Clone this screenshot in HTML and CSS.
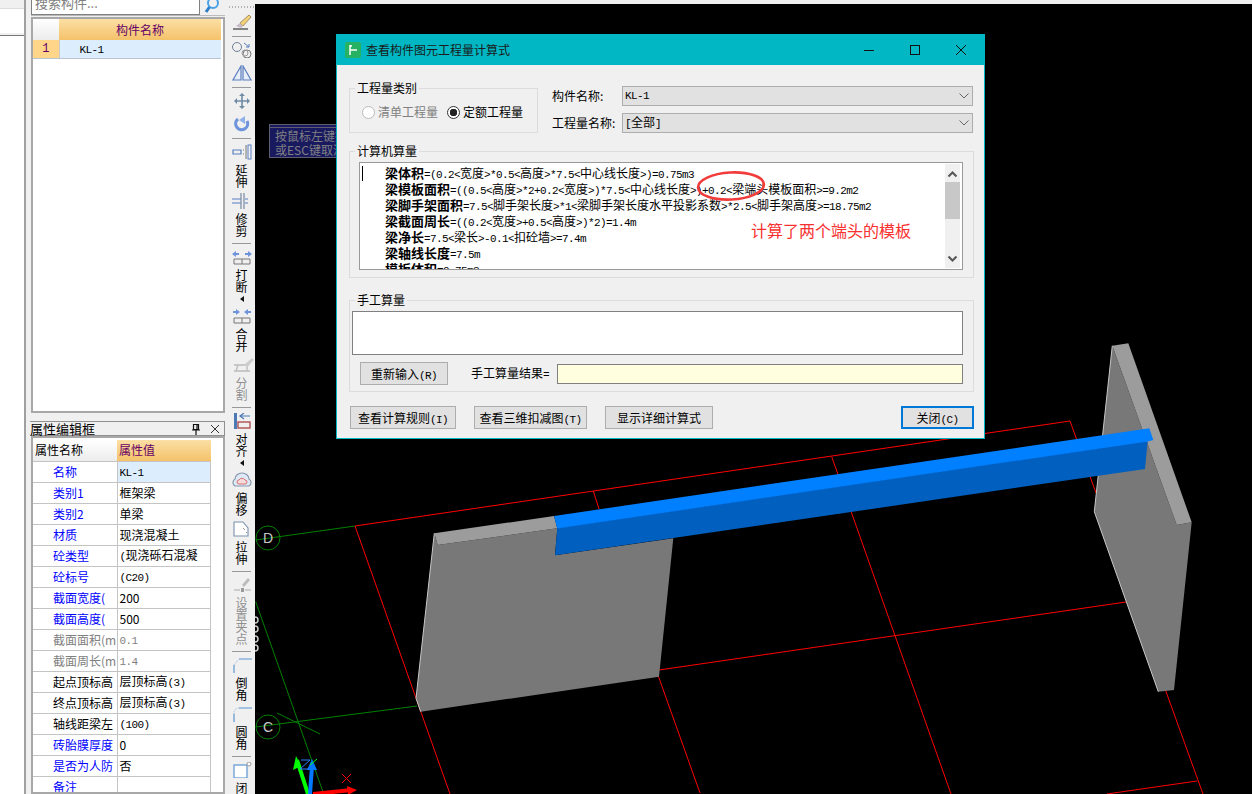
FILE: index.html
```html
<!DOCTYPE html>
<html lang="zh-CN">
<head>
    <meta charset="UTF-8">
    <title>查看构件图元工程量计算式</title>
    <link rel="stylesheet" href="styles.css">
</head>
<body>
    <div class="strip">
        <div class="strip-tab"></div>
        <div class="strip-rest"></div>
    </div>

    <div class="side">
        <div class="search">
            <div class="search-input">搜索构件...</div>
            <svg class="search-icon" width="16" height="16" viewBox="0 0 16 16">
                <circle cx="9" cy="4" r="5" fill="none" stroke="#4aa3e8" stroke-width="2"/>
                <path d="M5.5 8 L2 13" stroke="#2f7fc8" stroke-width="3"/>
            </svg>
        </div>
        <div class="frame list-frame">
            <table class="grid list">
                <tr class="head">
                    <th class="corner"></th>
                    <th class="orange">构件名称</th>
                </tr>
                <tr class="picked">
                    <td class="row-no">1</td>
                    <td class="name-cell"><span class="m">KL-1</span></td>
                </tr>
            </table>
        </div>

        <div class="prop-title">
            <span>属性编辑框</span>
            <svg width="12" height="12" viewBox="0 0 12 12"><path d="M3.5 1.5h5v5h-5z M2 7h8 M6 7v5 M7 2v4" fill="none" stroke="#111" stroke-width="1.2"/></svg>
            <svg class="prop-close" width="12" height="12" viewBox="0 0 12 12"><path d="M2 2l8 8M10 2l-8 8" stroke="#333" stroke-width="1"/></svg>
        </div>
        <div class="frame prop-frame">
            <table class="grid props">
                <tr class="head">
                    <th class="corner prop-name">属性名称</th>
                    <th class="orange prop-val">属性值</th>
                </tr>
                <tr class="picked"><td class="blue">名称</td><td class="val"><span class="m">KL-1</span></td></tr>
                <tr><td class="blue">类别1</td><td class="val">框架梁</td></tr>
                <tr><td class="blue">类别2</td><td class="val">单梁</td></tr>
                <tr><td class="blue">材质</td><td class="val">现浇混凝土</td></tr>
                <tr><td class="blue">砼类型</td><td class="val"><span class="m">(</span>现浇砾石混凝</td></tr>
                <tr><td class="blue">砼标号</td><td class="val"><span class="m">(C20)</span></td></tr>
                <tr><td class="blue">截面宽度(</td><td class="val">200</td></tr>
                <tr><td class="blue">截面高度(</td><td class="val">500</td></tr>
                <tr><td class="grey">截面面积(m</td><td class="val grey"><span class="m">0.1</span></td></tr>
                <tr><td class="grey">截面周长(m</td><td class="val grey"><span class="m">1.4</span></td></tr>
                <tr><td>起点顶标高</td><td class="val">层顶标高<span class="m">(3)</span></td></tr>
                <tr><td>终点顶标高</td><td class="val">层顶标高<span class="m">(3)</span></td></tr>
                <tr><td>轴线距梁左</td><td class="val"><span class="m">(100)</span></td></tr>
                <tr><td class="blue">砖胎膜厚度</td><td class="val">0</td></tr>
                <tr><td class="blue">是否为人防</td><td class="val">否</td></tr>
                <tr><td class="blue">备注</td><td class="val"></td></tr>
            </table>
        </div>
    </div>

    <div class="tools">
        <div class="grip"></div>
        <div class="tool">
            <svg width="24" height="16" viewBox="0 0 24 16"><path d="M19 1 L10 9 L13 12 L21 3z" fill="#f3d27a" stroke="#a98f5a"/><path d="M10 9 L6 12 L11 14 L13 12z" fill="#c9b9c9"/><path d="M3 15 H18" stroke="#555" stroke-width="1.4"/></svg>
        </div>
        <div class="sep"></div>
        <div class="tool roomy">
            <svg width="24" height="16" viewBox="0 0 24 16"><circle cx="7" cy="5" r="4.5" fill="none" stroke="#6f7f95"/><circle cx="17" cy="12" r="4" fill="none" stroke="#777"/><circle cx="15" cy="11" r="3" fill="none" stroke="#999"/><path d="M14 1l5 4M19 2v3h-3" fill="none" stroke="#5b7fc0"/></svg>
        </div>
        <div class="tool">
            <svg width="24" height="16" viewBox="0 0 24 16"><path d="M11 1 L3 15 H11z M13 1 L21 15 H13z" fill="#e8eefa" stroke="#5b7fc0" stroke-width="1.2"/></svg>
        </div>
        <div class="sep"></div>
        <div class="tool roomy">
            <svg width="24" height="16" viewBox="0 0 24 16"><path d="M12 1v14M5 8h14" stroke="#6f8aa5" stroke-width="1.6"/><path d="M12 0l-3 3h6zM12 16l-3-3h6zM4 8l3-3v6zM20 8l-3-3v6z" fill="#6f8aa5"/></svg>
        </div>
        <div class="tool">
            <svg width="24" height="16" viewBox="0 0 24 16"><path d="M8 3 A6 6 0 1 0 17 5" fill="none" stroke="#6f94dc" stroke-width="3.2"/><path d="M15 0v8l-6-4z" fill="#8fb0e8"/></svg>
        </div>
        <div class="sep"></div>
        <div class="tool">
            <svg width="24" height="16" viewBox="0 0 24 16"><path d="M3 6h8v4H3z" fill="none" stroke="#5b7fc0" stroke-width="1.2"/><path d="M13 6h1M13 10h1M16 1v14" stroke="#777"/><rect x="18" y="1" width="3" height="14" fill="none" stroke="#5b7fc0"/></svg>
            <div class="lab">延伸</div>
        </div>
        <div class="tool">
            <svg width="24" height="16" viewBox="0 0 24 16"><path d="M2 6h9M2 10h9M15 6h3M15 10h3" stroke="#5b7fc0" stroke-width="1.2"/><path d="M11 0v16M14 0v16" stroke="#7a8ca5" stroke-width="1.2"/></svg>
            <div class="lab">修剪</div>
        </div>
        <div class="sep"></div>
        <div class="tool">
            <svg width="24" height="16" viewBox="0 0 24 16"><path d="M2 5l4-3v2h3v2H6v2zM22 5l-4-3v2h-3v2h3v2z" fill="#6f94dc"/><path d="M4 10h16v5H4zM12 10v5" fill="none" stroke="#777"/></svg>
            <div class="lab">打断</div>
            <div class="tri"></div>
        </div>
        <div class="tool">
            <svg width="24" height="16" viewBox="0 0 24 16"><path d="M10 4L6 1v2H3v2h3v2zM14 4l4-3v2h3v2h-3v2z" fill="#6f94dc"/><path d="M4 10h16v5H4zM12 10v5" fill="none" stroke="#777"/></svg>
            <div class="lab">合并</div>
        </div>
        <div class="tool">
            <svg width="24" height="16" viewBox="0 0 24 16"><path d="M4 8h15M4 14h16M6 14l2-6M17 14v-6" stroke="#bbb" fill="none" stroke-width="1.3"/><path d="M22 1l-8 7 3 2 7-7z" fill="#ccc"/></svg>
            <div class="lab off">分割</div>
        </div>
        <div class="sep"></div>
        <div class="tool">
            <svg width="24" height="16" viewBox="0 0 24 16"><rect x="4" y="0" width="3" height="16" fill="#4f79b5"/><path d="M20 3h-9M14 0l-4 3 4 3" fill="none" stroke="#4f79b5" stroke-width="1.2"/><rect x="8" y="9" width="12" height="6" fill="none" stroke="#b05050" stroke-width="1.4"/></svg>
            <div class="lab">对齐</div>
            <div class="tri"></div>
        </div>
        <div class="tool">
            <svg width="24" height="16" viewBox="0 0 24 16"><path d="M5 14 a4 4 0 0 1 0-7 a7 6 0 0 1 14 0 a4 4 0 0 1 0 7z" fill="#dfe8f5" stroke="#8898ad" stroke-width="1.2"/><path d="M9 12 a2 2 0 0 1 0-4 a3.5 3.5 0 0 1 6 0 a2 2 0 0 1 0 4z" fill="#f5dcdc" stroke="#d87070"/></svg>
            <div class="lab">偏移</div>
        </div>
        <div class="tool">
            <svg width="24" height="16" viewBox="0 0 24 16"><path d="M4 1h9l5 6v8H4z" fill="#fff" stroke="#7d92ad" stroke-width="1.1"/><path d="M13 7l2 2M16 11l1 1" stroke="#999"/></svg>
            <div class="lab">拉伸</div>
        </div>
        <div class="sep"></div>
        <div class="tool">
            <svg width="24" height="16" viewBox="0 0 24 16"><path d="M18 1l-6 7 2 2 6-7z" fill="#bbb"/><path d="M4 13h6M15 13h6" stroke="#aaa"/><rect x="11" y="11" width="3" height="4" fill="#999"/></svg>
            <div class="lab off">设置夹点</div>
        </div>
        <div class="sep"></div>
        <div class="tool">
            <svg width="24" height="16" viewBox="0 0 24 16"><path d="M4 16V8M9 2h13" stroke="#5b95d0" stroke-width="1.2" fill="none"/><path d="M4 8L9 2" stroke="#9cb6d8" stroke-dasharray="1 1"/></svg>
            <div class="lab">倒角</div>
        </div>
        <div class="tool">
            <svg width="24" height="16" viewBox="0 0 24 16"><path d="M4 16V8M9 2h13" stroke="#5b95d0" stroke-width="1.2" fill="none"/><path d="M4 8Q4 2 9 2" stroke="#9cb6d8" stroke-dasharray="1 1" fill="none"/></svg>
            <div class="lab">圆角</div>
        </div>
        <div class="sep"></div>
        <div class="tool">
            <svg width="24" height="16" viewBox="0 0 24 16"><rect x="4" y="3" width="13" height="13" fill="#fff" stroke="#5b95d0" stroke-width="1.2"/><circle cx="19" cy="2" r="2" fill="#fff" stroke="#999"/></svg>
            <div class="lab">闭</div>
        </div>
    </div>

    <div class="view">
        <svg class="scene" width="997" height="790" viewBox="255 4 997 790">
            <g class="red-lines">
                <path d="M355 526 L800 460.7 L1070 421 L1096 493"/>
                <path d="M355 526 L450 794"/>
                <path d="M593.3 491 L599 509"/>
                <path d="M658.3 676 L700 793"/>
                <path d="M831.7 456.7 L951 794"/>
                <path d="M659 670 L1128 601.7"/>
                <path d="M1165.7 690.7 L1203 794"/>
                <path d="M1106.7 794 L1197 781"/>
            </g>
            <g class="green-lines">
                <circle cx="268" cy="538" r="12"/>
                <circle cx="268" cy="727" r="12"/>
                <path d="M255.7 540 L355 526"/>
                <path d="M255.7 727 L417 706"/>
                <path d="M255.7 601.7 L323 792"/>
                <path d="M277 713 L320 734"/>
            </g>
            <text class="axis-name" x="268" y="543">D</text>
            <text class="axis-name" x="268" y="732">C</text>
            <g class="marks">
                <circle cx="255" cy="620" r="3"/>
                <circle cx="255" cy="629" r="3"/>
                <circle cx="255" cy="639" r="3"/>
                <circle cx="255" cy="648" r="3"/>
            </g>

            <polygon class="wall-face" points="437.7,545 557.3,528.3 555,555.3 673.3,538.3 659,676.7 420.7,711.7 416,698.3 434.3,533.3"/>
            <polygon class="wall-top" points="434.3,533.3 554,516 557.3,528.3 437.7,545"/>
            <path class="wall-edge" d="M434.3 533.3 L416 698.3 L420.7 711.7"/>
            <polygon class="wall-face" points="1112.3,345.7 1176.7,525 1191.7,522.3 1174,690 1158.3,691.7 1094.3,511.7"/>
            <polygon class="wall-top" points="1112.3,345.7 1128.3,343.3 1191.7,522.3 1176.7,525"/>
            <path class="wall-edge" d="M1112.3 345.7 L1094.3 511.7 L1158.3 691.7"/>

            <polygon class="beam-front" points="557.3,528 1147.7,441 1145,469 555,555.3"/>
            <polygon class="beam-top" points="554,516 1149.3,428.3 1153.3,440 1147.7,441.5 557.3,528.5"/>

            <g class="axes">
                <path d="M297 760 L308 794" stroke="#00ff00" stroke-width="4"/>
                <path d="M296 756 L293 770 L301 766z" fill="#00ff00"/>
                <path d="M312 766 L310 794" stroke="#0078ff" stroke-width="4"/>
                <path d="M312 759 L307 770 L317 770z" fill="#0078ff"/>
                <path d="M313 794 L352 790" stroke="#ff0000" stroke-width="4"/>
                <path d="M347 786 L357 790 L348 795z" fill="#ff0000"/>
                <path d="M342 774 L351 783 M351 774 L342 783" stroke="#ff0000"/>
                <path d="M301 760 H310 L300 769 H309" stroke="#2a80ff" fill="none"/>
                <path d="M310 765 L317 759" stroke="#00ff00"/>
            </g>
        </svg>

        <div class="hint">
            <div>按鼠标左键指定</div>
            <div>或ESC键取消</div>
        </div>

        <div class="dialog">
            <div class="dialog-title">
                <svg class="app-icon" width="16" height="16" viewBox="0 0 16 16"><rect width="16" height="16" rx="2" fill="#27b262"/><path d="M5 3v10M5 4h2M5 8h7" stroke="#fff" stroke-width="1.5" fill="none"/></svg>
                <span class="dialog-name">查看构件图元工程量计算式</span>
                <svg class="win-btn" width="10" height="10" viewBox="0 0 10 10"><path d="M0 5.5H10" stroke="#111"/></svg>
                <svg class="win-btn" width="10" height="10" viewBox="0 0 10 10"><rect x=".5" y=".5" width="9" height="9" fill="none" stroke="#111"/></svg>
                <svg class="win-btn" width="10" height="10" viewBox="0 0 10 10"><path d="M0 0L10 10M10 0L0 10" stroke="#111"/></svg>
            </div>

            <div class="dialog-body">
                <div class="top-row">
                    <fieldset class="group kind">
                        <legend>工程量类别</legend>
                        <div class="radios">
                            <span class="radio off"><i class="dot"></i>清单工程量</span>
                            <span class="radio"><i class="dot on"></i>定额工程量</span>
                        </div>
                    </fieldset>
                    <div class="picks">
                        <label>构件名称:</label>
                        <div class="select"><span class="m">KL-1</span><svg width="10" height="6" viewBox="0 0 10 6"><path d="M.5 .5L5 5L9.5 .5" fill="none" stroke="#666"/></svg></div>
                        <label>工程量名称:</label>
                        <div class="select"><span><span class="m">[</span>全部<span class="m">]</span></span><svg width="10" height="6" viewBox="0 0 10 6"><path d="M.5 .5L5 5L9.5 .5" fill="none" stroke="#666"/></svg></div>
                    </div>
                </div>

                <fieldset class="group calc">
                    <legend>计算机算量</legend>
                    <div class="calc-box">
                        <div class="caret"></div>
                        <div class="calc-lines">
                            <div><b>梁体积</b><span class="m">=(0.2&lt;</span>宽度<span class="m">&gt;*0.5&lt;</span>高度<span class="m">&gt;*7.5&lt;</span>中心线长度<span class="m">&gt;)=0.75m3</span></div>
                            <div><b>梁模板面积</b><span class="m">=((0.5&lt;</span>高度<span class="m">&gt;*2+0.2&lt;</span>宽度<span class="m">&gt;)*7.5&lt;</span>中心线长度<span class="m">&gt;)+0.2&lt;</span>梁端头模板面积<span class="m">&gt;=9.2m2</span></div>
                            <div><b>梁脚手架面积</b><span class="m">=7.5&lt;</span>脚手架长度<span class="m">&gt;*1&lt;</span>梁脚手架长度水平投影系数<span class="m">&gt;*2.5&lt;</span>脚手架高度<span class="m">&gt;=18.75m2</span></div>
                            <div><b>梁截面周长</b><span class="m">=((0.2&lt;</span>宽度<span class="m">&gt;+0.5&lt;</span>高度<span class="m">&gt;)*2)=1.4m</span></div>
                            <div><b>梁净长</b><span class="m">=7.5&lt;</span>梁长<span class="m">&gt;-0.1&lt;</span>扣砼墙<span class="m">&gt;=7.4m</span></div>
                            <div><b>梁轴线长度</b><span class="m">=7.5m</span></div>
                            <div><b>模板体积</b><span class="m">=0.75m3</span></div>
                        </div>
                        <div class="scroll">
                            <svg width="15" height="8" viewBox="0 0 15 8"><path d="M3.5 6.5L7.5 2.5L11.5 6.5" fill="none" stroke="#555" stroke-width="2"/></svg>
                            <div class="thumb"></div>
                            <svg class="scroll-down" width="15" height="8" viewBox="0 0 15 8"><path d="M3.5 1.5L7.5 5.5L11.5 1.5" fill="none" stroke="#555" stroke-width="2"/></svg>
                        </div>
                    </div>
                </fieldset>

                <fieldset class="group hand">
                    <legend>手工算量</legend>
                    <div class="hand-box"></div>
                    <div class="hand-row">
                        <div class="btn reenter">重新输入<span class="m">(R)</span></div>
                        <span class="hand-label">手工算量结果<span class="m">=</span></span>
                        <div class="hand-result"></div>
                    </div>
                </fieldset>

                <div class="actions">
                    <div class="btn rule">查看计算规则<span class="m">(I)</span></div>
                    <div class="btn cut">查看三维扣减图<span class="m">(T)</span></div>
                    <div class="btn detail">显示详细计算式</div>
                    <div class="btn close">关闭<span class="m">(C)</span></div>
                </div>
            </div>

            <svg class="mark-ring" width="76" height="36" viewBox="0 0 76 36"><ellipse cx="38" cy="18" rx="33" ry="13.5" transform="rotate(-3 38 18)" fill="none" stroke="#f23c3c" stroke-width="2.6"/></svg>
            <div class="note">计算了两个端头的模板</div>
        </div>
    </div>
</body>
</html>
```

FILE: styles.css
```css
* {
    box-sizing: border-box;
}
html, body {
    margin: 0;
    height: 794px;
    overflow: hidden;
}
body {
    display: flex;
    background-color: #f0f0f0;
    color: #000;
    font-family: "Noto Sans CJK SC", "Liberation Sans", sans-serif;
    font-size: 12px;
    line-height: 16px;
}
/* latin in the old app font is 6px a char */
.m {
    font-family: "Liberation Mono", monospace;
    font-size: 11px;
    letter-spacing: -0.6px;
}

/* far left strip */
.strip {
    width: 26px;
    flex: none;
    border-right: 2px solid #a0a0a0;
    display: flex;
    flex-direction: column;
}
.strip-tab {
    height: 28px;
    margin-top: 8px;
    background-color: #fff;
    border-top: 1px solid #ddd;
    border-bottom: 1px solid #777;
    box-shadow: inset 0 -2px 0 #f0f0f0;
}
.strip-rest {
    flex: 1;
    background-color: #fff;
}

/* lists on the left */
.side {
    width: 199px;
    flex: none;
    padding-left: 5px;
    display: flex;
    flex-direction: column;
}
.search {
    height: 16px;
    flex: none;
    display: flex;
    border-bottom: 1px solid #bbb;
}
.search-input {
    width: 169px;
    height: 15px;
    padding-left: 3px;
    line-height: 6px;
    color: #808080;
    background-color: #fff;
    border: 1px solid #808080;
    border-top: none;
    overflow: hidden;
    font-size: 13px;
}
.search-icon {
    margin: -1px 0 0 4px;
}
.frame {
    border: 2px solid #a8a8a8;
    background-color: #fff;
}
.list-frame {
    height: 396px;
    flex: none;
    margin-top: 1px;
}
.prop-frame {
    flex: 1;
    min-height: 0;
    padding-top: 2px;
    overflow: hidden;
}
.grid {
    border-collapse: collapse;
    table-layout: fixed;
}
.grid th, .grid td {
    padding: 0;
    font-weight: 400;
    overflow: hidden;
    white-space: nowrap;
}
.corner {
    background: linear-gradient(#ffffff, #ececec);
}
.orange {
    background: linear-gradient(#fbdfa5, #f4c26a);
    color: #660066;
}
.list {
    width: 188px;
}
.list .corner {
    width: 26px;
}
.list .head th {
    height: 21px;
}
.list .picked td {
    height: 18px;
    border-bottom: 1px solid #b9c4d0;
}
.list .orange {
    text-align: center;
}
.row-no {
    background-color: #ffd58a;
    color: #660066;
    text-align: center;
    font-family: "Liberation Mono", monospace;
    border-right: 1px solid #c8c8c8;
}
.name-cell {
    background-color: #dcedfd;
    padding-left: 20px !important;
}
.prop-title {
    height: 15px;
    flex: none;
    margin: 8px 0 0 -1px;
    display: flex;
    align-items: center;
    border: 1px solid #909090;
    border-left: none;
    font-size: 13px;
}
.prop-title span {
    width: 160px;
}
.prop-close {
    margin-left: 7px;
}
.props {
    width: 178px;
}
.props .head th {
    height: 21px;
    text-align: left;
}
.props td {
    height: 21px;
    border-top: 1px solid #c4c4c4;
    border-bottom: 1px solid #c4c4c4;
    padding-left: 20px;
}
.prop-name {
    width: 84px;
    padding-left: 2px !important;
}
.prop-val {
    padding-left: 2px !important;
}
.props td.val {
    padding-left: 2px;
    border-left: 1px solid #c4c4c4;
    border-right: 1px solid #c4c4c4;
}
.props .picked .val {
    background-color: #dcedfd;
}
.blue {
    color: #0000ff;
}
.grey {
    color: #808080;
}

/* vertical drawing toolbar */
.tools {
    width: 30px;
    flex: none;
    padding: 6px 0 0 3px;
    display: flex;
    flex-direction: column;
    align-items: center;
}
.grip {
    width: 26px;
    height: 2px;
    flex: none;
    margin-bottom: 6px;
    background-image: linear-gradient(90deg, #b0b0b0 50%, transparent 50%);
    background-size: 3px 2px;
}
.tool {
    display: flex;
    flex: none;
    flex-direction: column;
    align-items: center;
    margin-bottom: 5px;
}
.tool.roomy {
    margin-bottom: 7px;
}
.lab {
    width: 12px;
    margin-top: 4px;
    font-size: 12px;
    line-height: 12px;
    word-break: break-all;
}
.lab.off {
    color: #909090;
}
.tri {
    width: 0;
    height: 0;
    margin: 3px 0 1px;
    border-top: 3px solid transparent;
    border-bottom: 3px solid transparent;
    border-right: 4px solid #111;
}
.sep {
    width: 19px;
    height: 1px;
    flex: none;
    margin: 1px 0 5px;
    background-color: #999;
}

/* 3d view */
.view {
    flex: 1;
    height: 790px;
    margin-top: 4px;
    background-color: #000;
    position: relative;
}
.scene {
    display: block;
}
.red-lines path {
    fill: none;
    stroke: #ff0000;
    stroke-width: 1;
}
.green-lines circle, .green-lines path {
    fill: none;
    stroke: #008000;
    stroke-width: 1;
}
.axis-name {
    fill: #c8c8c8;
    font-family: "Liberation Sans", sans-serif;
    font-size: 14px;
    text-anchor: middle;
}
.marks circle {
    fill: none;
    stroke: #c8c8c8;
    stroke-width: 1.5;
}
.wall-face {
    fill: #787878;
}
.wall-top {
    fill: #9c9c9c;
}
.wall-edge {
    fill: none;
    stroke: #c8c8c8;
}
.beam-front {
    fill: #005fbf;
}
.beam-top {
    fill: #007fff;
}
.hint {
    position: absolute;
    left: 14px;
    top: 120px;
    width: 90px;
    height: 34px;
    padding: 4px 0 0 5px;
    background-color: #191960;
    border: 1px solid #5e5e70;
    color: #808080;
    line-height: 14px;
    font-size: 12px;
    box-shadow: inset 0 2px 0 #191960, inset 0 3px 0 #5e5e70;
    white-space: nowrap;
    overflow: hidden;
}

/* dialog */
.dialog {
    position: absolute;
    left: 81px;
    top: 30px;
    width: 649px;
    height: 405px;
    background-color: #f0f0f0;
    border: 1px solid #00b7c3;
    border-top: none;
}
.dialog-title {
    height: 31px;
    padding: 0 18px 0 8px;
    display: flex;
    align-items: center;
    background-color: #00b7c3;
    color: #1a1a1a;
}
.dialog-name {
    flex: 1;
    margin-left: 5px;
}
.win-btn {
    margin-left: 36px;
}
.dialog-body {
    padding: 16px 10px 0 12px;
}
.top-row {
    display: flex;
    height: 52px;
    gap: 14px;
}
.group {
    margin: 0;
    padding: 0;
    border: 1px solid #dcdcdc;
    min-width: 0;
}
.group legend {
    margin-left: 5px;
    padding: 0 2px;
    line-height: 14px;
}
.kind {
    width: 189px;
    height: 52px;
}
.radios {
    display: flex;
    gap: 9px;
    padding: 9px 0 0 12px;
}
.radio {
    display: flex;
    align-items: center;
    gap: 3px;
}
.radio.off {
    color: #808080;
}
.dot {
    width: 13px;
    height: 13px;
    border-radius: 50%;
    border: 1px solid #333;
    background-color: #fff;
    display: block;
}
.off .dot {
    border-color: #bbb;
}
.dot.on {
    background: radial-gradient(circle, #222 3.5px, #fff 4px);
}
.picks {
    flex: 1;
    display: grid;
    grid-template-columns: 70px 351px;
    grid-auto-rows: 20px;
    row-gap: 7px;
    padding-top: 5px;
    align-items: center;
}
.select {
    height: 20px;
    padding: 0 3px 0 2px;
    display: flex;
    align-items: center;
    justify-content: space-between;
    background-color: #e1e1e1;
    border: 1px solid #adadad;
}
.calc {
    height: 134px;
    margin-top: 11px;
}
.calc-box {
    position: relative;
    width: 604px;
    height: 108px;
    margin: 4px 0 0 9px;
    background-color: #fff;
    border: 1px solid #999;
    overflow: hidden;
}
.caret {
    position: absolute;
    left: 2px;
    top: 3px;
    width: 1px;
    height: 15px;
    background-color: #000;
}
.calc-lines {
    padding: 2px 0 0 25px;
    white-space: nowrap;
}
.calc-lines div {
    height: 16px;
}
.calc-lines b {
    font-size: 13px;
    font-weight: 700;
}
.scroll {
    position: absolute;
    right: 2px;
    top: 1px;
    bottom: 1px;
    width: 15px;
    background-color: #f0f0f0;
    padding-top: 6px;
    display: flex;
    flex-direction: column;
}
.scroll svg {
    flex: none;
}
.thumb {
    height: 37px;
    margin-top: 4px;
    background-color: #c8c8c8;
}
.scroll-down {
    margin-top: auto;
    margin-bottom: 5px;
}
.hand {
    height: 99px;
    margin-top: 15px;
}
.hand-box {
    width: 611px;
    height: 44px;
    margin: 4px 0 0 2px;
    background-color: #fff;
    border: 1px solid #808080;
}
.hand-row {
    display: flex;
    align-items: center;
    margin: 7px 0 0 10px;
}
.btn {
    height: 23px;
    line-height: 21px;
    text-align: center;
    background-color: #e1e1e1;
    border: 1px solid #adadad;
    white-space: nowrap;
}
.reenter {
    width: 88px;
}
.hand-label {
    width: 86px;
    margin-left: 23px;
}
.hand-result {
    width: 406px;
    height: 20px;
    background-color: #ffffe0;
    border: 1px solid #808080;
}
.actions {
    display: flex;
    margin-top: 14px;
    padding-left: 1px;
}
.rule {
    width: 106px;
}
.cut {
    width: 113px;
    margin-left: 18px;
}
.detail {
    width: 108px;
    margin-left: 18px;
}
.close {
    width: 73px;
    margin-left: auto;
    border: 2px solid #0078d7;
    line-height: 19px;
}
.mark-ring {
    position: absolute;
    left: 356px;
    top: 134px;
}
.note {
    position: absolute;
    left: 414px;
    top: 186px;
    color: #f83030;
    font-size: 16px;
    line-height: 20px;
    white-space: nowrap;
}
```
